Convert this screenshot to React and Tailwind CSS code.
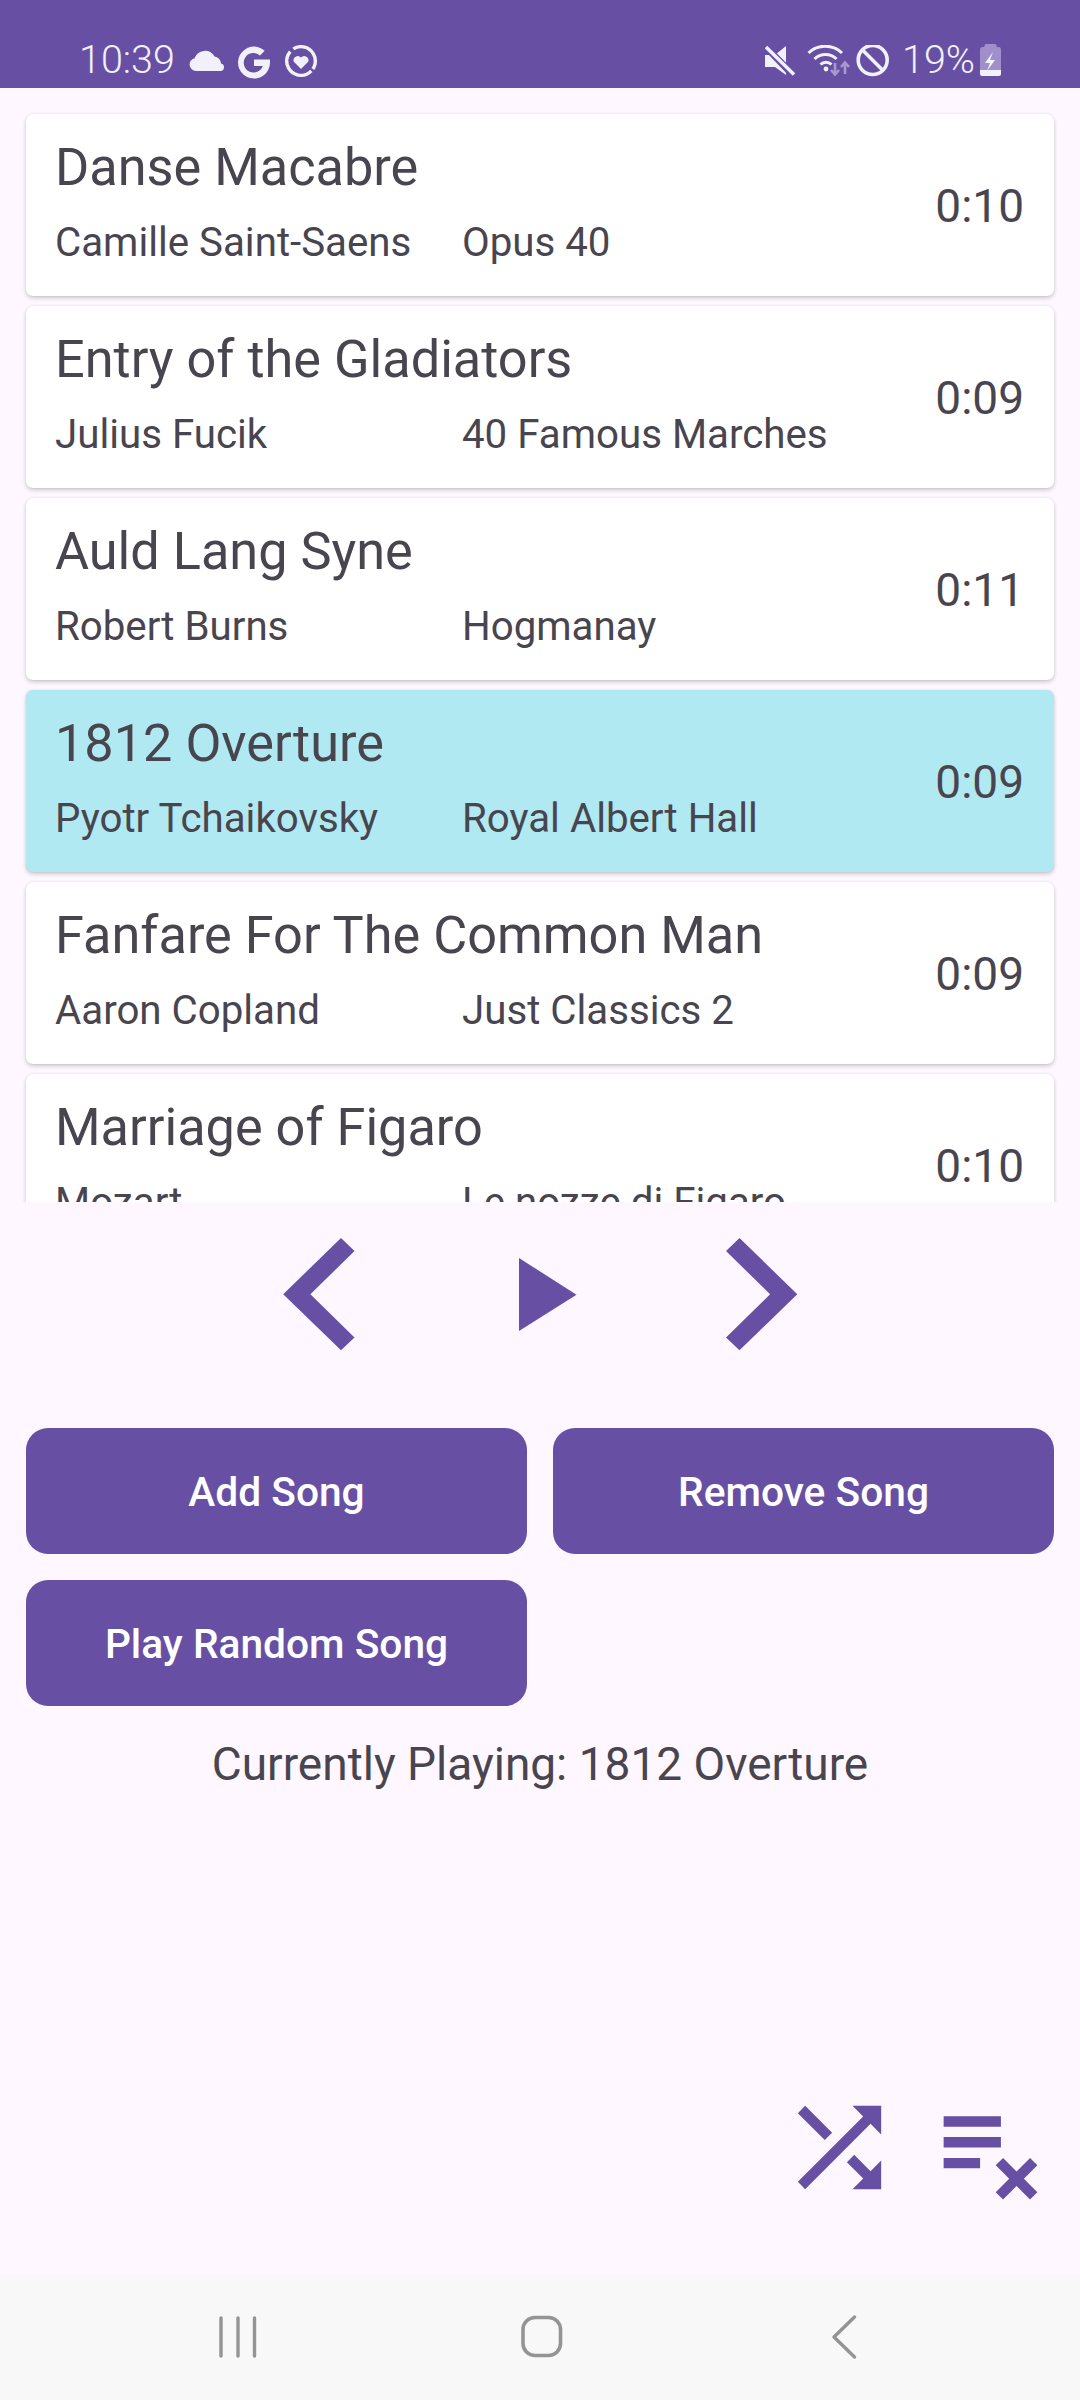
const PURPLE = "#6750A4";

const songs = [
  { t: "Danse Macabre", a: "Camille Saint-Saens", b: "Opus 40", d: "0:10" },
  { t: "Entry of the Gladiators", a: "Julius Fucik", b: "40 Famous Marches", d: "0:09" },
  { t: "Auld Lang Syne", a: "Robert Burns", b: "Hogmanay", d: "0:11" },
  { t: "1812 Overture", a: "Pyotr Tchaikovsky", b: "Royal Albert Hall", d: "0:09", active: true },
  { t: "Fanfare For The Common Man", a: "Aaron Copland", b: "Just Classics 2", d: "0:09" },
  { t: "Marriage of Figaro", a: "Mozart", b: "Le nozze di Figaro", d: "0:10" },
];

function Card({ s }) {
  return (
    <div className={`h-[182px] shrink-0 rounded-[7px] flex items-center justify-between pl-[29px] pr-[30px] shadow-[0_2px_4px_rgba(0,0,0,0.2),0_0_2px_rgba(0,0,0,0.08)] ${s.active ? "bg-[#B0E9F1]" : "bg-white"}`}>
      <div className="flex flex-col -mt-[1px]">
        <div className="text-[52.25px] leading-[66px] h-[66px] -mt-[6px] whitespace-nowrap">{s.t}</div>
        <div className="flex text-[40.25px] leading-[52px] h-[52px] mt-[16px] whitespace-nowrap">
          <div className="w-[407px]">{s.a}</div>
          <div>{s.b}</div>
        </div>
      </div>
      <div className="text-[46px] leading-[58px] mt-[2px]">{s.d}</div>
    </div>
  );
}

function StatusBar() {
  const c = "#F2F0F9";
  return (
    <div className="h-[88px] bg-[#6750A4] shrink-0 flex items-start justify-between pl-[79px] pr-[79px] pt-[38px] text-[#F2F0F9] text-[39.5px] leading-[44px] font-light">
      <div className="flex items-start">
        <span className="w-[110px]">10:39</span>
        <svg width="130" height="34" viewBox="189 45 130 34" fill={c} className="mt-[7px]">
          <path d="M196 71a6.500 6.500 0 0 1-1.500-12.800A11 11 0 0 1 214.500 56.500a7.500 7.500 0 0 1 6.500 7 3.800 3.800 0 0 1-.5 7.500z" />
          <path d="M270 59.500h-16v6.500h8.800a9.800 9.800 0 1 1-2.800-10.600l4.700-4.700a16 16 0 1 0 5.300 12z" />
          <circle cx="301" cy="61" r="14.300" fill="none" stroke={c} strokeWidth="3.400" strokeDasharray="27 2.500 44 4 12 0" transform="rotate(-75 301 61)" />
          <path d="M301 69l-7.200-7.200a4.300 4.300 0 0 1 7.200-4.400 4.300 4.300 0 0 1 7.200 4.400z" />
        </svg>
      </div>
      <div className="flex items-start">
        <svg width="125" height="34" viewBox="765 45 125 34" fill="none" className="mt-[7px]">
          <path d="M765 55h10l11-9v29l-11-8h-10z" fill={c} />
          <path d="M763 44l32 33" stroke="#6750A4" strokeWidth="7" />
          <path d="M766 47l28 27.500" stroke={c} strokeWidth="3.400" />
          <path d="M808.500 53a24 24 0 0 1 33.500 0M814.500 59a16 16 0 0 1 22 0M820.500 64.500a8 8 0 0 1 11 0" stroke={c} strokeWidth="3" />
          <circle cx="826" cy="69" r="2.400" fill={c} />
          <path d="M835 63v11m-4-4l4 4.500 4-4.500M845 74V63m-4 4l4-4.500 4 4.500" stroke="#A798CE" strokeWidth="2.600" />
          <circle cx="872.700" cy="60" r="14.500" stroke={c} strokeWidth="3.600" />
          <path d="M862.500 50l20.500 20.500" stroke={c} strokeWidth="3.600" />
        </svg>
        <span className="ml-[12px] w-[78px]">19%</span>
        <svg width="21" height="32" viewBox="980 44 21 32" className="mt-[6px]">
          <path d="M986 44h9a1.500 1.500 0 0 1 1.500 1.500V47h2a2.500 2.500 0 0 1 2.500 2.500V70h-21V49.500a2.500 2.500 0 0 1 2.500-2.500h2v-1.500A1.500 1.500 0 0 1 986 44z" fill="#A18FCB" />
          <path d="M980 70h21v4a2 2 0 0 1-2 2h-17a2 2 0 0 1-2-2z" fill={c} />
          <path d="M993 52l-8 11h5l-3 8 8-11h-5z" fill={c} />
        </svg>
      </div>
    </div>
  );
}

function Controls() {
  return (
    <div className="flex h-[227px] shrink-0 items-start pt-[36px]">
      <svg width="72" height="113" viewBox="283 1237.700 72 113" fill={PURPLE} className="ml-[283px]">
        <path d="M283.200 1294L341 1237.700l13.500 13L310.400 1294l44.100 43.300-13.500 12.700z" />
      </svg>
      <svg width="58" height="73" viewBox="519 1257.300 58 73" fill={PURPLE} className="ml-[164px] mt-[20px]">
        <path d="M519 1257.300L576.500 1294 519 1330.300z" />
      </svg>
      <svg width="72" height="113" viewBox="725.500 1237.700 72 113" fill={PURPLE} className="ml-[149px]">
        <path d="M796.800 1294L739 1237.700l-13.500 13 44.100 43.300-44.100 43.300 13.500 12.700z" />
      </svg>
    </div>
  );
}

function Btn({ children }) {
  return (
    <div className="h-[126px] rounded-[22px] bg-[#6750A4] text-white text-[40.700px] font-medium flex items-center justify-center">
      <span className="mt-[3px]">{children}</span>
    </div>
  );
}

export default function App() {
  return (
    <div className="w-[1080px] h-[2400px] flex flex-col bg-[#FEF7FF] text-[#49454F] overflow-hidden" style={{ fontFamily: "Roboto, sans-serif" }}>
      <StatusBar />
      <div className="h-[1114px] shrink-0 overflow-hidden flex flex-col gap-[10px] pl-[26px] pr-[26px] pt-[26px]">
        {songs.map((s) => <Card key={s.t} s={s} />)}
      </div>
      <Controls />
      <div className="grid grid-cols-2 gap-x-[26px] gap-y-[26px] pl-[26px] pr-[26px] -mt-[1px]">
        <Btn>Add Song</Btn>
        <Btn>Remove Song</Btn>
        <Btn>Play Random Song</Btn>
      </div>
      <div className="text-center text-[46px] leading-[58px] mt-[29px]">Currently Playing: 1812 Overture</div>
      <div className="flex-1 flex items-end justify-end pr-[27px] gap-[26px] pb-[64px]">
        <svg width="125" height="125" viewBox="0 0 24 24" fill={PURPLE}>
          <path d="M10.590 9.170L5.410 4 4 5.410l5.170 5.170 1.420-1.410zM14.500 4l2.040 2.040L4 18.590 5.410 20 17.960 7.460 20 9.500V4h-5.500zm.33 9.410l-1.410 1.410 3.130 3.130L14.500 20H20v-5.500l-2.040 2.040-3.130-3.130z" />
        </svg>
        <svg width="125" height="125" viewBox="0 0 24 24" fill={PURPLE}>
          <path d="M14 10H3v2h11v-2zm0-4H3v2h11V6zM3 16h7v-2H3v2zm11.410 6L17 19.410 19.590 22 21 20.590 18.410 18 21 15.410 19.590 14 17 16.590 14.410 14 13 15.410 15.590 18 13 20.590 14.410 22z" />
        </svg>
      </div>
      <div className="h-[126px] shrink-0 bg-[#F7F8F7] flex items-start pt-[42px]">
        <svg width="38" height="42" viewBox="219 2316 38 42" fill="none" stroke="#949494" strokeWidth="3.400" strokeLinecap="round" className="ml-[219px]">
          <path d="M221 2318v38M238 2318v38M254.500 2318v38" />
        </svg>
        <svg width="44" height="44" viewBox="519 2315 44 44" fill="none" stroke="#949494" strokeWidth="3.600" className="ml-[263px] -mt-[1px]">
          <rect x="522" y="2317.500" width="37.500" height="38" rx="12" />
        </svg>
        <svg width="26" height="46" viewBox="830 2314 26 46" fill="none" stroke="#949494" strokeWidth="3.400" strokeLinecap="round" strokeLinejoin="round" className="ml-[267px] -mt-[2px]">
          <path d="M853.500 2317L833 2337l20.500 20" />
        </svg>
      </div>
    </div>
  );
}
